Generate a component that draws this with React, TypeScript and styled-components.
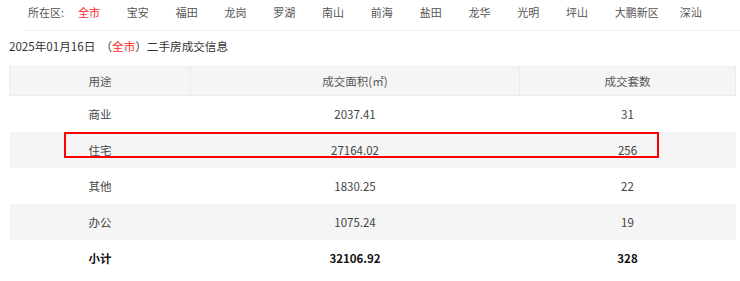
import React from 'react';
import styled, { createGlobalStyle } from 'styled-components';

const districts = [
  '全市',
  '宝安',
  '福田',
  '龙岗',
  '罗湖',
  '南山',
  '前海',
  '盐田',
  '龙华',
  '光明',
  '坪山',
  '大鹏新区',
  '深汕',
];

const rows = [
  { use: '商业', area: '2037.41', count: '31' },
  { use: '住宅', area: '27164.02', count: '256' },
  { use: '其他', area: '1830.25', count: '22' },
  { use: '办公', area: '1075.24', count: '19' },
];

function App() {
  return (
    <>
      <GlobalStyle />
      <Page>
        <DistrictBar>
          <DistrictLabel>所在区:</DistrictLabel>
          {districts.map((d, i) => (
            <DistrictItem key={d} $active={i === 0} $long={d.length > 2}>
              {d}
            </DistrictItem>
          ))}
        </DistrictBar>
        <Title>
          2025年01月16日&nbsp;&nbsp;（<Red>全市</Red>）二手房成交信息
        </Title>
        <TableWrap>
          <Table>
            <colgroup>
              <col style={{ width: 181 }} />
              <col style={{ width: 329 }} />
              <col style={{ width: 216 }} />
            </colgroup>
            <thead>
              <tr>
                <HeadCell>用途</HeadCell>
                <HeadCell>成交面积(㎡)</HeadCell>
                <HeadCell>成交套数</HeadCell>
              </tr>
            </thead>
            <tbody>
              {rows.map((r, i) => (
                <BodyRow key={r.use} $striped={i % 2 === 1}>
                  <Cell>{r.use}</Cell>
                  <Cell>{r.area}</Cell>
                  <Cell>{r.count}</Cell>
                </BodyRow>
              ))}
              <BodyRow $striped={false}>
                <Cell $bold>小计</Cell>
                <Cell $bold>32106.92</Cell>
                <Cell $bold>328</Cell>
              </BodyRow>
            </tbody>
          </Table>
          <Highlight />
        </TableWrap>
      </Page>
    </>
  );
}

const GlobalStyle = createGlobalStyle`
  body {
    margin: 0;
    background: #fff;
    font-family: "Noto Sans CJK SC", "Noto Sans", sans-serif;
  }
`;

const Page = styled.div`
  width: 740px;
  height: 281px;
  overflow: hidden;
`;

const DistrictBar = styled.div`
  display: flex;
  align-items: center;
  height: 24px;
  margin-left: 25px;
  padding-left: 3px;
  padding-bottom: 6px;
  border-bottom: 1px solid #eeeeee;
  font-size: 11px;
  color: #555;
`;

const DistrictLabel = styled.span`
  margin-right: 14px;
`;

const DistrictItem = styled.span<{ $active: boolean; $long: boolean }>`
  margin-right: ${(props) => (props.$long ? '21px' : '26.8px')};
  white-space: nowrap;
  color: ${(props) => (props.$active ? '#ff2a2a' : '#555')};
  cursor: pointer;
`;

const Title = styled.div`
  height: 35px;
  line-height: 30px;
  padding-left: 9px;
  font-size: 11.6px;
  color: #333;
`;

const Red = styled.span`
  color: #ff2a2a;
`;

const TableWrap = styled.div`
  position: relative;
  margin-left: 9px;
  width: 726px;
`;

const Table = styled.table`
  width: 726px;
  border-collapse: collapse;
  table-layout: fixed;
  font-size: 11.5px;
`;

const HeadCell = styled.th`
  height: 28px;
  padding: 0;
  background: #f5f5f5;
  border: 1px solid #ececec;
  font-weight: normal;
  color: #555;
  text-align: center;
`;

const BodyRow = styled.tr<{ $striped: boolean }>`
  height: 36px;
  background: ${(props) => (props.$striped ? '#f5f5f5' : '#fff')};
`;

const Cell = styled.td<{ $bold?: boolean }>`
  padding: 0;
  text-align: center;
  color: ${(props) => (props.$bold ? '#111' : '#444')};
  font-weight: ${(props) => (props.$bold ? 700 : 400)};
`;

const Highlight = styled.div`
  position: absolute;
  left: 55px;
  top: 66px;
  width: 591px;
  height: 22px;
  border: 2px solid #ff0000;
  pointer-events: none;
`;

export default App;
